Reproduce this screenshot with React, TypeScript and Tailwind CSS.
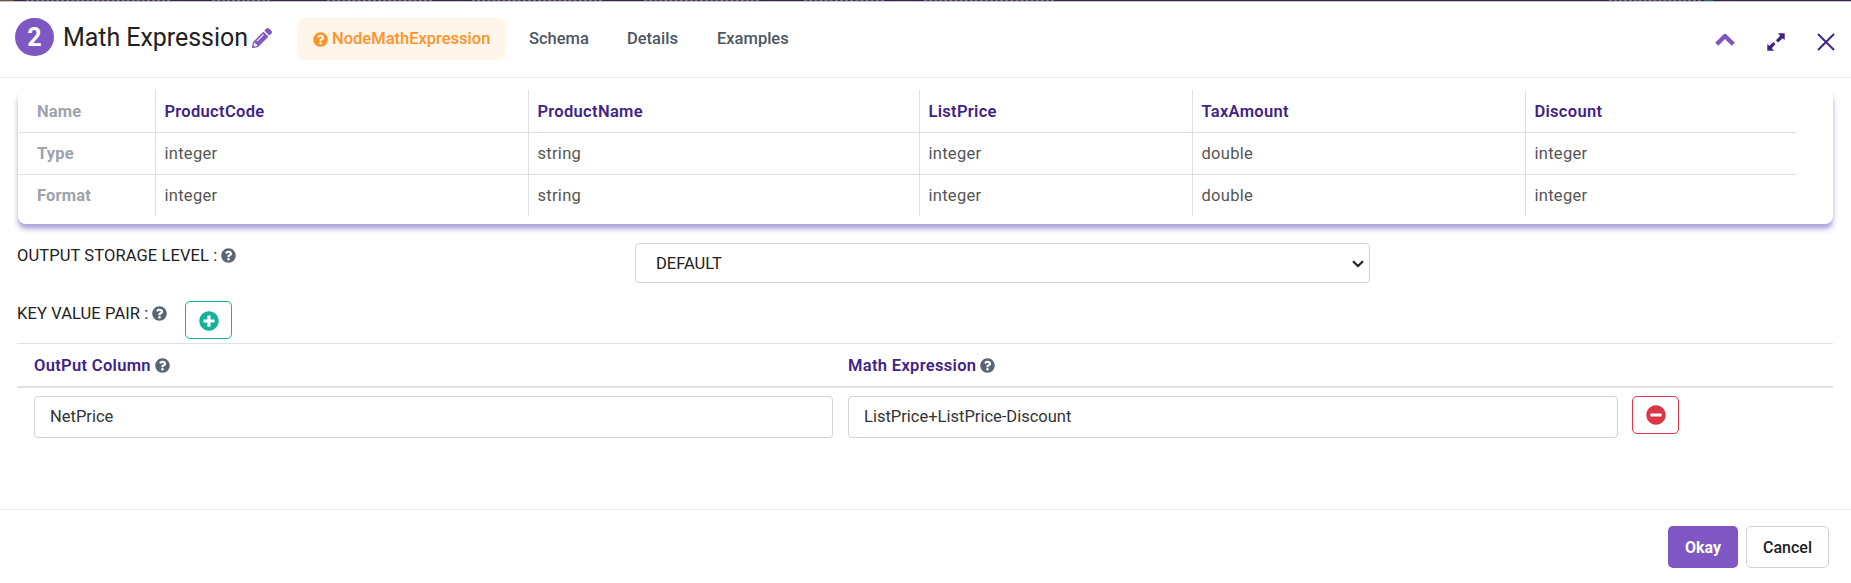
import React from "react";
import {
  FaMinusCircle,
  FaPencilAlt,
  FaPlusCircle,
  FaQuestionCircle,
} from "react-icons/fa";

type Column = { name: string; type: string; format: string };

const columns: Column[] = [
  { name: "ProductCode", type: "integer", format: "integer" },
  { name: "ProductName", type: "string", format: "string" },
  { name: "ListPrice", type: "integer", format: "integer" },
  { name: "TaxAmount", type: "double", format: "double" },
  { name: "Discount", type: "integer", format: "integer" },
];

const grid = "grid grid-cols-[138px_373px_391px_273px_333px_270px]";

function Help() {
  return <FaQuestionCircle className="size-[15px] shrink-0 text-[#5b6571]" />;
}

function SchemaRow({ label, field }: { label: string; field: keyof Column }) {
  const size =
    field === "name"
      ? "h-[43px] border-b border-[#dde1e6]"
      : field === "type"
        ? "h-[42px] border-b border-[#dde1e6]"
        : "h-[41px]";
  return (
    <div className={`${grid} ${size} w-[1778px]`}>
      <div className={`flex items-center border-r border-[#dde1e6] pl-[19px] font-bold tracking-[0.2px] text-[#9da3ab] ${field === "name" ? "pt-px" : ""}`}>{label}</div>
      {columns.map((c, i) => (
        <div
          key={c.name}
          className={`flex items-center pl-[8.4px] tracking-[0.32px] ${i < columns.length - 1 ? "border-r border-[#dde1e6]" : ""} ${
            field === "name" ? "pt-px font-semibold text-[#3f2387]" : "text-[#555]"
          }`}
        >
          {c[field]}
        </div>
      ))}
    </div>
  );
}

function Header() {
  return (
    <header className="flex h-[76px] items-start border-b border-[#e9ebee]">
      <div className="ml-[15px] mt-4 flex h-[38px] w-[39px] items-center justify-center rounded-full bg-[#7e57c2] pt-px text-[25px] font-bold text-white">
        2
      </div>
      <h1 className="ml-[9px] mt-[18px] w-[184px] whitespace-nowrap text-[25px] leading-[36px] tracking-[-0.05px] text-[#212121]">Math Expression</h1>
      <FaPencilAlt className="ml-[5px] mt-[26px] size-5 text-[#7e57c2]" />
      <nav className="ml-[25px] mt-4 flex h-[42px] items-center font-medium text-[#4d565f]">
        <a className="flex h-full w-[209px] items-center gap-1 rounded-lg bg-[#fff5e8] pl-4 text-[#ff922b]">
          <FaQuestionCircle className="size-[15px]" />
          NodeMathExpression
        </a>
        <a className="ml-[23px] w-[98px]">Schema</a>
        <a className="w-[90px]">Details</a>
        <a>Examples</a>
      </nav>
      <div className="ml-auto mr-[16px] mt-[31px] flex items-start text-[#3f2387]">
        <svg className="mr-[32px] h-[13px] w-5" viewBox="0 0 20 13" fill="none" stroke="#7e57c2" strokeWidth="4.4" strokeLinejoin="round">
          <path d="M1.7 11.2L10 3L18.3 11.2" />
        </svg>
        <svg className="mr-[32px] size-[18px]" viewBox="0 0 18 18" fill="currentColor">
          <path d="M11 0.3H17.7V7L15.6 5.2L11.1 9.4L8.9 7.3L13.2 2.8ZM7 17.7H0.3V11L2.4 12.8L6.4 8.9L8.5 11L4.8 15.2Z" />
        </svg>
        <svg className="size-[18px]" viewBox="0 0 18 18" stroke="currentColor" strokeWidth="2" fill="none">
          <path d="M1 1L17 17M17 1L1 17" />
        </svg>
      </div>
    </header>
  );
}

export default function App() {
  return (
    <div className="flex h-[583px] w-[1851px] flex-col overflow-hidden bg-white font-['Roboto',sans-serif] text-[16.5px] leading-6 text-[#212121]">
      <div className="flex h-[2px] shrink-0 border-b border-[#c9c5cd] bg-[#35234b]">
        <span className="w-[14px] bg-[#73513f]" />
        <span className="ml-[12px] w-[144px] border-t border-dashed border-[#77717f]" />
        <span className="ml-[42px] w-[58px] border-t border-dashed border-[#77717f]" />
        <span className="ml-[57px] w-[105px] border-t border-dashed border-[#77717f]" />
        <span className="ml-[40px] w-[130px] border-t border-dashed border-[#77717f]" />
        <span className="ml-[42px] w-[115px] border-t border-dashed border-[#77717f]" />
        <span className="ml-[45px] w-[80px] border-t border-dashed border-[#77717f]" />
        <span className="ml-[40px] w-[130px] border-t border-dashed border-[#77717f]" />
        <span className="ml-[555px] w-[92px] border-t border-dashed border-[#77717f]" />
        <span className="ml-[3px] w-[9px] bg-[#1b6b62]" />
      </div>
      <Header />
      <main className="flex h-[431px] shrink-0 flex-col">
        <section className="mt-3 h-[144px] shrink-0 overflow-hidden">
          <div className="mx-[18px] h-[134px] rounded-lg bg-white shadow-[0_5px_5px_rgba(89,75,183,0.5)]">
            <SchemaRow label="Name" field="name" />
            <SchemaRow label="Type" field="type" />
            <SchemaRow label="Format" field="format" />
          </div>
        </section>
        <div className="flex h-[58px] shrink-0 items-start px-[17px]">
          <label className="mt-[9px] flex w-[618px] items-center gap-1 tracking-[0.1px]">
            <span className="pt-px">OUTPUT STORAGE LEVEL :</span> <Help />
          </label>
          <div className="mt-[9px] flex h-10 w-[735px] items-center justify-between rounded border border-[#ced4da] pl-5 pr-[5px] pt-px">
            <span>DEFAULT</span>
            <svg className="h-[8px] w-[12px]" viewBox="0 0 12 8" fill="none" stroke="#212121" strokeWidth="2.2">
              <path d="M1 1.2L6 6L11 1.2" />
            </svg>
          </div>
        </div>
        <div className="flex h-[51px] shrink-0 items-start pl-[17px]">
          <label className="mt-[9px] flex w-[150px] items-center gap-1 whitespace-nowrap tracking-[0.1px]">
            <span className="pt-px">KEY VALUE PAIR :</span> <Help />
          </label>
          <button className="ml-[18px] mt-[9px] flex h-[38px] w-[47px] items-center justify-center rounded-[5px] border border-[#12b39a] pt-px text-[#12b39a]">
            <FaPlusCircle className="size-5" />
          </button>
        </div>
        <div className="ml-[17px] mr-[18px]">
          <div className="flex h-[45px] items-center border-b-2 border-t border-[#dee2e6] pl-[17px] font-semibold tracking-[0.32px] text-[#3f2387]">
            <div className="flex w-[814px] items-center gap-1"><span className="pt-px">OutPut Column</span> <Help /></div>
            <div className="flex items-center gap-1"><span className="pt-px">Math Expression</span> <Help /></div>
          </div>
          <div className="flex items-start pl-[17px] pt-2 text-[#333]">
            <div className="flex h-[42px] w-[799px] items-center rounded border border-[#ced4da] pl-[15px]">NetPrice</div>
            <div className="ml-[15px] flex h-[42px] w-[770px] items-center rounded border border-[#ced4da] pl-[15px]">
              ListPrice+ListPrice-Discount
            </div>
            <button className="ml-[14px] flex h-[38px] w-[47px] items-center justify-center rounded-[5px] border border-[#dc3545] text-[#dc3545]">
              <FaMinusCircle className="size-5" />
            </button>
          </div>
        </div>
      </main>
      <footer className="flex flex-1 justify-end gap-2 border-t border-[#e9ebee] pr-[22px] pt-4 text-base font-medium">
        <button className="h-[42px] w-[70px] rounded-[5px] bg-[#7e57c2] pt-px font-bold text-white">Okay</button>
        <button className="h-[42px] w-[83px] rounded-[5px] border border-[#ced4da] pt-px">Cancel</button>
      </footer>
    </div>
  );
}
